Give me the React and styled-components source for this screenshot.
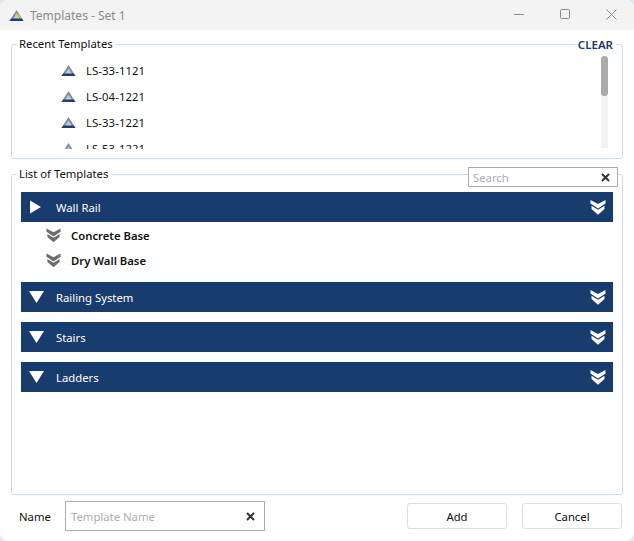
import styled, { createGlobalStyle } from 'styled-components';

const GlobalStyle = createGlobalStyle`
  html, body {
    margin: 0;
    background: #dfe7ef;
  }
  * {
    box-sizing: border-box;
  }
`;

const Window = styled.div`
  width: 634px;
  height: 541px;
  display: flex;
  flex-direction: column;
  background: #fff;
  border-radius: 8px;
  overflow: hidden;
  font-family: "Noto Sans", "Open Sans", sans-serif;
  font-size: 11.3px;
  color: #111;
`;

const TitleBar = styled.div`
  height: 30px;
  flex: none;
  display: flex;
  align-items: center;
  background: #f3f3f3;
  padding-left: 9px;
`;

const TitleText = styled.span`
  margin-left: 6px;
  color: #8b8b8b;
  font-size: 12px;
`;

const WindowButtons = styled.div`
  margin-left: auto;
  align-self: flex-start;
  display: flex;
  align-items: center;
  color: #8a8a8a;
`;

const WindowButton = styled.span`
  width: 46px;
  height: 28px;
  display: flex;
  align-items: center;
  justify-content: center;
`;

const Body = styled.div`
  flex: 1;
  display: flex;
  flex-direction: column;
  padding: 6px 11px 0;
`;

const Group = styled.fieldset`
  position: relative;
  margin: 0;
  padding: 0;
  min-width: 0;
  border: 1px solid #cfdbe6;
  border-radius: 3px;
  height: ${(props) => props.$height}px;
  margin-top: ${(props) => props.$top || 0}px;
`;

const Legend = styled.legend`
  margin-left: 4px;
  padding: 0 3px;
  line-height: 16px;
  color: #111;
`;

const ClearLabel = styled.span`
  position: absolute;
  top: -15px;
  right: 6px;
  padding: 0 3px;
  background: #fff;
  line-height: 16px;
  font-weight: 600;
  font-size: 11.5px;
  color: #1c3a63;
`;

const RecentArea = styled.div`
  display: flex;
  align-items: flex-start;
  margin-top: 5px;
  padding-right: 14px;
`;

const RecentList = styled.div`
  flex: 1;
  height: 92px;
  overflow: hidden;
  padding-left: 49px;
`;

const RecentRow = styled.div`
  height: 26px;
  display: flex;
  align-items: center;
  gap: 10px;
  letter-spacing: 0.1px;
`;

const ScrollTrack = styled.div`
  width: 7px;
  height: 92px;
  margin-top: -1px;
  background: #f3f3f3;
`;

const ScrollThumb = styled.div`
  height: 40px;
  border-radius: 4px;
  background: #ababab;
`;

const SearchBox = styled.div`
  position: absolute;
  top: -15px;
  right: 4px;
  width: 150px;
  height: 20px;
  display: flex;
  align-items: center;
  justify-content: space-between;
  padding: 0 7px 0 4px;
  background: #fff;
  border: 1px solid #ababab;
  color: #aab0b8;
`;

const Sections = styled.div`
  display: flex;
  flex-direction: column;
  gap: 10px;
  padding: 10px 9px 0;
`;

const SectionHeader = styled.div`
  height: 30px;
  display: flex;
  align-items: center;
  background: #193c6e;
  color: #fff;
  padding: 0 7px 0 8px;
`;

const SectionTitle = styled.span`
  margin-left: 12px;
  flex: 1;
`;

const SubList = styled.div`
  display: flex;
  flex-direction: column;
  margin: 1px 0 -1px;
`;

const SubRow = styled.div`
  height: 25px;
  display: flex;
  align-items: center;
  gap: 10px;
  padding-left: 25px;
  font-weight: 600;
  color: #111;
`;

const Footer = styled.div`
  display: flex;
  align-items: center;
  height: 30px;
  margin-top: 6px;
  padding-left: 8px;
`;

const NameLabel = styled.span`
  width: 46px;
`;

const NameInput = styled.div`
  width: 200px;
  height: 30px;
  display: flex;
  align-items: center;
  justify-content: space-between;
  padding: 0 9px 0 5px;
  border: 1px solid #ababab;
  color: #a9aeb5;
`;

const FooterButton = styled.button`
  width: 100px;
  height: 26px;
  margin-left: ${(props) => props.$gap}px;
  background: #fff;
  border: 1px solid #dedede;
  border-radius: 3px;
  font: inherit;
  color: #111;
`;

const Logo = ({ accent }) => (
  <svg width="15" height="13" viewBox="0 0 15 13">
    <path d="M7.5 1 L14.5 12 H0.5 Z" fill="#7d8ba0" />
    <path d="M7.5 4.5 L11 10 H4 Z" fill="#c3cbd6" />
    <path d="M0.5 12 L2.2 9.4 H12.8 L14.5 12 Z" fill="#1f3f70" />
    {accent && <path d="M7 3.5 L13 8.5 L11.5 9.5 L6.2 5 Z" fill="#e8b92e" />}
  </svg>
);

const Chevrons = ({ color = '#fff', width = 16 }) => (
  <svg width={width} height="15" viewBox="0 0 16 15">
    <path d="M0.5 0 L8 4 L15.5 0 V3.5 L8 8.5 L0.5 3.5 Z" fill={color} />
    <path d="M1.5 5.8 L8 9.8 L14.5 5.8 V9 L8 14.8 L1.5 9 Z" fill={color} />
  </svg>
);

const Arrow = ({ open }) => (
  <svg width="15" height="14" viewBox="0 0 15 14">
    {open ? (
      <path d="M0 1 H15 L7.5 13 Z" fill="#fff" />
    ) : (
      <path d="M1 0.5 L12 7 L1 13.5 Z" fill="#fff" />
    )}
  </svg>
);

const CloseIcon = () => (
  <svg width="9" height="9" viewBox="0 0 9 9">
    <path d="M1 1 L8 8 M8 1 L1 8" stroke="#333" strokeWidth="2" />
  </svg>
);

const recent = ['LS-33-1121', 'LS-04-1221', 'LS-33-1221', 'LS-53-1221'];
const sections = [
  { name: 'Wall Rail', children: ['Concrete Base', 'Dry Wall Base'] },
  { name: 'Railing System', open: true },
  { name: 'Stairs', open: true },
  { name: 'Ladders', open: true },
];

const App = () => {
  return (
    <>
      <GlobalStyle />
      <Window>
        <TitleBar>
          <Logo accent />
          <TitleText>Templates - Set 1</TitleText>
          <WindowButtons>
            <WindowButton>
              <svg width="10" height="10" viewBox="0 0 10 10">
                <path d="M0 5.5 H10" stroke="#8a8a8a" />
              </svg>
            </WindowButton>
            <WindowButton>
              <svg width="10" height="10" viewBox="0 0 10 10">
                <rect x="0.5" y="0.5" width="9" height="9" rx="1" fill="none" stroke="#8a8a8a" />
              </svg>
            </WindowButton>
            <WindowButton>
              <svg width="11" height="11" viewBox="0 0 11 11">
                <path d="M0.5 0.5 L10.5 10.5 M10.5 0.5 L0.5 10.5" stroke="#8a8a8a" />
              </svg>
            </WindowButton>
          </WindowButtons>
        </TitleBar>
        <Body>
          <Group $height={123}>
            <Legend>Recent Templates</Legend>
            <ClearLabel>CLEAR</ClearLabel>
            <RecentArea>
              <RecentList>
                {recent.map((item) => (
                  <RecentRow key={item}>
                    <Logo />
                    {item}
                  </RecentRow>
                ))}
              </RecentList>
              <ScrollTrack>
                <ScrollThumb />
              </ScrollTrack>
            </RecentArea>
          </Group>
          <Group $height={329} $top={7}>
            <Legend>List of Templates</Legend>
            <SearchBox>
              Search
              <CloseIcon />
            </SearchBox>
            <Sections>
              {sections.map((section) => (
                <div key={section.name}>
                  <SectionHeader>
                    <Arrow open={section.open} />
                    <SectionTitle>{section.name}</SectionTitle>
                    <Chevrons />
                  </SectionHeader>
                  {section.children && (
                    <SubList>
                      {section.children.map((child) => (
                        <SubRow key={child}>
                          <Chevrons color="#6e6e6e" width={15} />
                          {child}
                        </SubRow>
                      ))}
                    </SubList>
                  )}
                </div>
              ))}
            </Sections>
          </Group>
          <Footer>
            <NameLabel>Name</NameLabel>
            <NameInput>
              Template Name
              <CloseIcon />
            </NameInput>
            <FooterButton $gap={142}>Add</FooterButton>
            <FooterButton $gap={15}>Cancel</FooterButton>
          </Footer>
        </Body>
      </Window>
    </>
  );
};

export default App;
